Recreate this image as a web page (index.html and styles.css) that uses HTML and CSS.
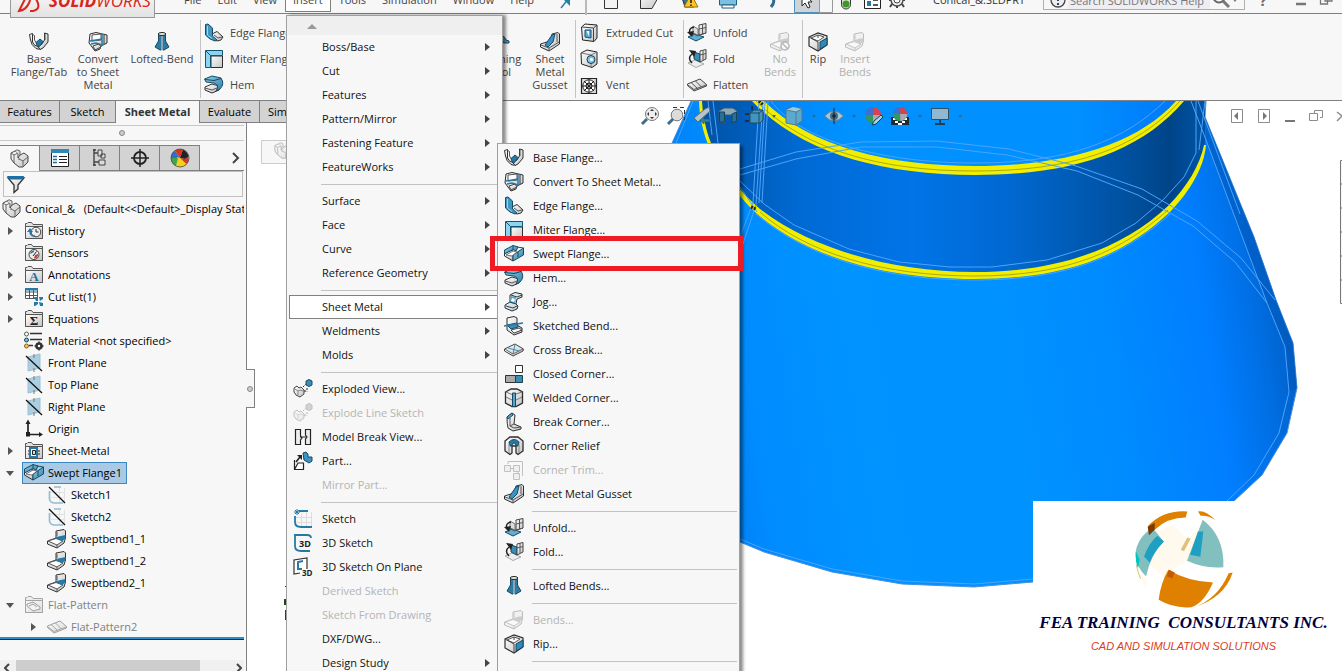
FILE: index.html
```html
<!DOCTYPE html>
<html lang="en">
<head>
<meta charset="utf-8">
<title>Conical_&amp;.SLDPRT</title>
<link rel="stylesheet" href="styles.css">
</head>
<body>
<svg class="defs" aria-hidden="true">
  <defs>
    <linearGradient id="gBlue" x1="0" y1="0" x2="1" y2="1"><stop offset="0" stop-color="#8fd0ea"/><stop offset="1" stop-color="#2b7da6"/></linearGradient>
    <linearGradient id="gGrey" x1="0" y1="0" x2="1" y2="1"><stop offset="0" stop-color="#fff"/><stop offset="1" stop-color="#c4c4c4"/></linearGradient>
  </defs>
  <g stroke-linejoin="round">
  <symbol id="base" viewBox="0 0 20 20"><g stroke="#2e2e2e"><path fill="url(#gGrey)" d="M.5 2.500 3.500 1.500V10Q5 14 9 14.500L12 16.500Q10 18 7 16.500 2 13 1.500 8Z"/><path fill="url(#gGrey)" d="M15.500 1 19 2V10L14 16 11 17.500 9 14.500 13 12 15.500 8Z"/></g><path fill="none" stroke="#555" d="M3 2 5.500 3.500V8L8 12M16 2V8"/><path fill="#2679a5" stroke="#14506f" d="M7 10.500 11 7 14 9.500 10.500 14.500 8 13.500Z"/></symbol>
  <symbol id="convert" viewBox="0 0 20 20"><path fill="url(#gGrey)" stroke="#2e2e2e" d="M2 2 8 .5 19 3V11L13 14 12 17 7 19 4 15 1 11Z"/><path fill="#fff" stroke="#555" d="M4 3 13 2V8L4 9Z"/><path fill="none" stroke="#2679a5" stroke-width="1.500" d="M2 9 14 7 14 2M3 12 8 11 14 13 14 7"/><path fill="url(#gGrey)" stroke="#444" d="M5 14 11 12 13 15 7 18Z"/><path fill="none" stroke="#333" d="M16 3V12"/></symbol>
  <symbol id="edge" viewBox="0 0 20 20"><path fill="url(#gGrey)" stroke="#2e2e2e" d="M8 11 13 8.500 19 14 17 17 13 18 8 15Z"/><path fill="none" stroke="#555" d="M10 12 14 15 18 14"/><path fill="#4296bd" stroke="#174a63" d="M1.500 1.500 4 1 8.500 5V13L13 17 11 18 6 16 1.500 12Z"/><path fill="none" stroke="#9cd5ec" d="M3.500 3V12L8 15.500"/></symbol>
  <symbol id="miter" viewBox="0 0 20 20"><path fill="url(#gGrey)" stroke="#2e2e2e" d="M7 7H18.500V18.500H7Z"/><path fill="#8ad5ef" stroke="#17556f" d="M1.500 1.500H18.500V6.500H6.500V18.500H1.500Z"/><path stroke="#17556f" d="M2 2 6.500 6.500"/></symbol>
  <symbol id="swept" viewBox="0 0 20 20"><path fill="url(#gGrey)" stroke="#2e2e2e" d="M.5 9 8 6 9 11V17L.5 12Z"/><path fill="url(#gBlue)" stroke="#174a63" d="M.5 6 9 1.500 14 3 12 7 9 5.500.5 10Z"/><path fill="url(#gBlue)" stroke="#174a63" d="M9 11 19.500 4V11L9 17Z"/><path fill="#fff" stroke="#555" stroke-width=".8" d="M2 11 9 7 13 8 8 12Z"/><path fill="none" stroke="#174a63" d="M9 1.500V5.500M13 3 19.500 4M14 8V13"/></symbol>
  <symbol id="hem" viewBox="0 0 20 20"><path fill="url(#gGrey)" stroke="#2e2e2e" d="M1 12 8 9 15 11 15 15 8 18 1 15Z"/><path fill="url(#gBlue)" stroke="#174a63" d="M.5 4 8 1 17 3Q21 9 16 14L12 16Q16 10 10 8L2 7Z"/><path fill="none" stroke="#174a63" d="M1 4.500 10 5.500 17 3.500"/><path fill="none" stroke="#555" d="M1 13 8 15 13 13"/></symbol>
  <symbol id="jog" viewBox="0 0 20 20"><path fill="url(#gGrey)" stroke="#2e2e2e" d="M6 3 11 .5 18 2V5L13 7 12 12 14 14 13 17 8 19 1 16V13L6 10Z"/><path fill="#55a6cc" d="M7 4 12 5 11 12 6 11Z"/><path fill="none" stroke="#174a63" d="M7 3 13 5 18 3M6 10 12 12M2 14 9 16 13 14"/><path fill="#fff" d="M8 6 11 7 10 10 7 9Z"/></symbol>
  <symbol id="sketched" viewBox="0 0 20 20"><path fill="url(#gGrey)" stroke="#2e2e2e" d="M3 2 10 .5 13 2V9L18 12V16L10 19 3 14Z"/><path fill="#3a8db5" stroke="#174a63" d="M3 9 13 7 14 11 7 13Z"/><path stroke="#2679a5" stroke-width="1.500" d="M0 10 19 7"/><path fill="#fff" stroke="#444" d="M7 14 15 12 18 14 10 17Z"/></symbol>
  <symbol id="cross" viewBox="0 0 20 20"><path fill="url(#gGrey)" stroke="#444" d="M.5 9 11 4 19.500 9 19 11 9 16 .5 11Z"/><path fill="none" stroke="#3a8db5" d="M4 8 15 11M9 14 11 4.500"/><path fill="none" stroke="#666" d="M1 9 9 14 19 9"/></symbol>
  <symbol id="closed" viewBox="0 0 20 20"><path fill="#fff" stroke="#333" d="M11.500 1.500H18.500V8.500H11.500Z"/><path fill="#aaa" stroke="#333" d="M1.500 11.500H11.500V18.500H1.500Z"/><path fill="#3a8db5" stroke="#1d3f52" d="M11.500 11.500H18.500V18.500H11.500Z"/></symbol>
  <symbol id="welded" viewBox="0 0 20 20"><path fill="url(#gGrey)" stroke="#2e2e2e" stroke-width="1.300" d="M1.500 4 7 1H13L18.500 4V15L12 18.500H8L1.500 15Z"/><path fill="none" stroke="#777" d="M2 4 9 7 18 4M2 9 8 12M18 9 12 12"/><path fill="#55a6cc" stroke="#174a63" d="M8.500 5H11.500V18.500H8.500Z"/></symbol>
  <symbol id="break" viewBox="0 0 20 20"><path fill="url(#gGrey)" stroke="#333" d="M3 5 8 1 11 3 10 12 17 15 17 17 9 19 4 16Q3 12 3 5Z"/><path fill="#55a6cc" stroke="#174a63" d="M3 5 8 1 9 3 4 7Z"/><path fill="none" stroke="#555" d="M6 6V14L10 16 17 15M6 14 10 12"/></symbol>
  <symbol id="relief" viewBox="0 0 20 20"><path fill="url(#gGrey)" stroke="#2e2e2e" stroke-width="1.300" d="M1 5 6 1H14L19 5V15L14 18.500 12 17V10H8V17L6 18.500 1 15Z"/><path fill="#2679a5" stroke="#174a63" d="M5 6Q10 1 15 6L14 10H12Q12 7 10 7T8 10H6Z"/><path stroke="#888" d="M5 8V17M15 8V17"/></symbol>
  <symbol id="trim" viewBox="0 0 20 20"><path fill="none" stroke="#444" d="M4 4V1.500H18.500V16M7 8.500H10M14 11V13"/><path fill="#ddd" stroke="#444" d="M.5 5.500H6.500V11.500H.5ZM9.500 5.500H15.500V11.500H9.500ZM9.500 13.500H15.500V19.500H9.500Z"/></symbol>
  <symbol id="gusset" viewBox="0 0 20 20"><path fill="url(#gGrey)" stroke="#2e2e2e" d="M12 2 18 .5 19.500 2V12L9 19 .5 15V12L10 9Z"/><path fill="none" stroke="#555" d="M1 13 9 16 19 10M9 16V19M17 2V10"/><path fill="#3a93c2" stroke="#174a63" d="M5 13 12 3 15 2 13 10 8 15Z"/></symbol>
  <symbol id="unfold" viewBox="0 0 20 20"><path fill="#5fb0d3" stroke="#174a63" d="M1 14 8 11 17 14 9 18Z"/><path fill="#ddd" stroke="#777" d="M6 3 11 6V12L6 10Z"/><path fill="url(#gGrey)" stroke="#444" d="M12 2 19 .5V10L12 12Z"/><path fill="none" stroke="#555" d="M12 6 19 4.500M15.500 1.500V11M6 10 10 13 19 10"/><path fill="none" stroke="#222" stroke-width="1.500" d="M7 4Q1 5 3 11"/><path fill="#222" d="M0 9 7 8 5 14Z"/></symbol>
  <symbol id="fold" viewBox="0 0 20 20"><path fill="#eee" stroke="#aaa" d="M1 14 8 11 17 15 9 18.500Z"/><path fill="#3a8db5" stroke="#174a63" d="M7 3 13 5V13L7 10Z"/><path fill="url(#gGrey)" stroke="#444" d="M13 2 19 .5V10L13 13Z"/><path fill="none" stroke="#555" d="M13 6 19 4.500M16 1.500V11"/><path fill="none" stroke="#222" stroke-width="1.500" d="M5 14Q0 9 5 5"/><path fill="#222" d="M2 1 9 2 7 8Z"/></symbol>
  <symbol id="lofted" viewBox="0 0 20 20"><path fill="#2d7ba0" stroke="#174a63" d="M6.500 2V9L3 15 8 18H9.500V3ZM13.500 2V9L17 15 12 18H10.500V3Z"/><ellipse cx="10" cy="2" rx="3.800" ry="1.500" fill="#eee" stroke="#222"/><path stroke="#fff" d="M10 4V19"/></symbol>
  <symbol id="bend" viewBox="0 0 20 20"><path fill="url(#gGrey)" stroke="#333" d="M9 2 17 .5 18.500 2V9L17 14 10 19 .5 15V12L9 9Z"/><path fill="#fff" stroke="#555" d="M1 12 9 9.500 16 12 10 16Z"/><path fill="#2679a5" d="M9 8 18.500 6V9L15 12.500 13 11 9 9.500Z"/><path stroke="#555" d="M10 3V7M10 16V19"/></symbol>
  <symbol id="nobends" viewBox="0 0 20 20"><use href="#bend"/><circle cx="15" cy="14" r="4" fill="#fff" stroke="#222" stroke-width="1.500"/><path stroke="#222" stroke-width="1.500" d="M12 11 18 17"/></symbol>
  <symbol id="rip" viewBox="0 0 20 20"><path fill="url(#gGrey)" stroke="#2e2e2e" stroke-width="1.200" d="M1 5 10 1 19 4V13L10 19 1 14Z"/><path fill="#fff" stroke="#555" d="M3 6 10 3 16 5 10 9Z"/><path fill="none" stroke="#444" d="M1 5 10 10V19M10 3V6"/><path fill="#2f8ab5" stroke="#174a63" d="M12 10 19 6V13L12 17Z"/></symbol>
  <symbol id="xcut" viewBox="0 0 20 20"><path fill="url(#gGrey)" stroke="#222" d="M1.500 4 5 1 17 2V15L14 18.500 2.500 17Z"/><path fill="none" stroke="#444" d="M2 4 13.500 5V18M13.500 5 17 2"/><path fill="#56b0dc" stroke="#17506f" d="M5 7H11V15L5 14Z"/><path fill="#fff" d="M6.500 8H9V13Z"/></symbol>
  <symbol id="hole" viewBox="0 0 20 20"><path fill="url(#gGrey)" stroke="#222" d="M1 4 7 1 17 3V15L12 18.500 1.500 15Z"/><path fill="none" stroke="#777" d="M1.500 4 11 6V18M11 6 17 3"/><circle cx="11" cy="10.500" r="4" fill="#7cc4e6" stroke="#1d3f52"/><circle cx="11.500" cy="10.500" r="1.600" fill="#fff"/></symbol>
  <symbol id="vent" viewBox="0 0 20 20"><path fill="#ddd" stroke="#222" stroke-width="1.200" d="M1.500 3.500H16.500V18.500H1.500Z"/><circle cx="9" cy="11" r="6.200" fill="#fff" stroke="#222"/><circle cx="9" cy="11" r="3" fill="none" stroke="#222"/><path stroke="#222" d="M9 4V18M2 11H16M4 6 14 16M14 6 4 16"/></symbol>
  <symbol id="flatten" viewBox="0 0 20 20"><path fill="url(#gGrey)" stroke="#444" d="M.5 9 13 4 19.500 9.500V11L7 16 .5 10.500Z"/><path fill="none" stroke="#555" d="M4 7.500 10.500 13.500M8.500 6 14.500 12M1 10 7 14.500 19 10"/></symbol>
  <symbol id="forming" viewBox="0 0 20 20"><path fill="#4a9bc2" stroke="#174a63" d="M2 3Q14 1 16 8L19 9V11H14Q10 7 2 8Z"/><path stroke="#222" stroke-width="2" d="M10 10V18"/></symbol>

  <symbol id="part" viewBox="0 0 20 20"><path fill="url(#gGrey)" stroke="#444" d="M1 4 5 2 8 4V9L10 6 14 4 18 7V13L13 18H9L4 14 1 10Z"/><path fill="none" stroke="#666" d="M1 4 4 6V14M4 6 8 4M9 10 13 12V18M13 12 18 8M9 9V11"/><path fill="#ddd" stroke="#666" d="M5 2 7 .8 10 2V6"/></symbol>
  <symbol id="folder" viewBox="0 0 20 20"><path fill="#e3e3e3" stroke="#555" d="M1.500 17.500V2.500H3L4 1.500H7.500L9 3.500H18.500V17.500Z"/><path fill="url(#gGrey)" stroke="#555" d="M1.500 5.500H18.500V17.500H1.500Z"/></symbol>
  <symbol id="history" viewBox="0 0 20 20"><use href="#folder"/><circle cx="12" cy="11" r="4.800" fill="#eee" stroke="#444"/><path fill="none" stroke="#333" d="M12 8V11H14.500"/><path fill="none" stroke="#2679a5" stroke-width="1.600" d="M11 15Q6 15 6 10"/><path fill="#2679a5" d="M3 11 6 7 9 11Z"/></symbol>
  <symbol id="sensors" viewBox="0 0 20 20"><use href="#folder"/><circle cx="10" cy="11.500" r="5" fill="#eee" stroke="#444"/><path fill="#2679a5" d="M6 11A4 4 0 0 1 10 7.500V9Z"/><path fill="#d33f1c" d="M10 15.500A4 4 0 0 0 14 11L11 12Z"/><path stroke="#222" d="M9 13 12.500 8.500"/></symbol>
  <symbol id="cutlist" viewBox="0 0 20 20"><path fill="#fff" stroke="#555" d="M1.500 1.500H13.500V11.500H1.500ZM5.500 2V11.500M9.500 2V11.500M2 5H13M2 8.500H13"/><path fill="#2679a5" d="M1 1H14V3.500H1Z"/><path fill="#2679a5" d="M10 10H14V14H12ZM15 10H19V12L16 14ZM10 15H14V17L11 19H10ZM15 15 19 16V19H16Z"/></symbol>
  <symbol id="material" viewBox="0 0 20 20"><g stroke-width="1"><circle cx="2.500" cy="3" r="2" fill="#fff" stroke="#555"/><circle cx="2.500" cy="9" r="2" fill="#6bb9dd" stroke="#245"/><circle cx="2.500" cy="15" r="2" fill="#ffd01a" stroke="#853"/></g><path stroke="#333" stroke-width="1.600" d="M6 2.500H18M6 8.500H18M5 14.500H9"/><circle cx="15" cy="15" r="2.500" fill="#fff" stroke="#333" stroke-width="2.600"/><path stroke="#333" stroke-width="1.500" d="M15 10.500V12M15 18V19.500M10.500 15H12M18 15H19.500"/></symbol>
  <symbol id="plane" viewBox="0 0 20 20"><path fill="#aacfe2" stroke="#9dc0d2" d="M4 4 16 1V15L4 18Z"/><path stroke="#777" d="M10 1V5M10 15V19"/><path stroke="#111" stroke-width="1.300" d="M2 3 18 18"/></symbol>
  <symbol id="origin" viewBox="0 0 20 20"><path fill="none" stroke="#222" stroke-width="1.700" d="M4 3V15.500H16"/><path fill="#222" d="M1.500 5 4 .5 6.500 5ZM15 13 19 15.500 15 18ZM2 13H6V17.500H2Z"/></symbol>
  <symbol id="smfolder" viewBox="0 0 20 20"><use href="#folder"/><path fill="#fff" stroke="#2679a5" stroke-width="2" d="M6 7H13V16H6Z"/><path fill="#ddd" stroke="#222" d="M8.500 9.500H11.500V13.500H8.500ZM4 10H5M4 13H5M14 10H16M14 13H16"/></symbol>
  <symbol id="sketchline" viewBox="0 0 20 20"><path stroke="#e2e2e2" d="M12.500 3V18M17.500 3V18M4 7.500H18M4 12.500H18"/><path fill="none" stroke="#93bdd2" stroke-width="1.700" d="M7 2H14M2.500 6V14Q3 18 8 18H16"/><path stroke="#111" stroke-width="1.300" d="M2 2 18 18"/></symbol>
  <symbol id="flatfolder" viewBox="0 0 20 20"><use href="#folder"/><path fill="#eee" stroke="#444" d="M3 9 9 7 16 12V14L9 16 3 11ZM5 11 9 9 13 12"/></symbol>

  <symbol id="proplist" viewBox="0 0 20 20"><path fill="#fff" stroke="#222" d="M1.500 1.500H18.500V18.500H1.500Z"/><path fill="#3188b5" d="M1 1H19V5H1Z"/><path stroke="#1c6f9b" stroke-width="1.500" d="M3 8.500H7M3 11.500H7M3 14.500H7"/><path stroke="#222" d="M9 8.500H17M9 11.500H17M9 14.500H17"/></symbol>
  <symbol id="config" viewBox="0 0 20 20"><path fill="none" stroke="#444" stroke-width="1.400" d="M4 1V18M4 5H8M4 14H10M3 2H6M3 17H6"/><path fill="#ddd" stroke="#444" d="M8 2H12V8H8ZM11 6H15V10H11ZM9 12H15V17H9Z"/></symbol>
  <symbol id="target" viewBox="0 0 20 20"><circle cx="10" cy="10" r="6" fill="none" stroke="#222" stroke-width="1.800"/><path stroke="#222" stroke-width="1.500" d="M10 1V19M1 10H19"/></symbol>
  <symbol id="ball" viewBox="0 0 20 20"><circle cx="10" cy="10" r="9" fill="#ddd"/><path fill="#2f6fc8" d="M10 10H1A9 9 0 0 1 5 2.500Z"/><path fill="#d93324" d="M10 10 5 2.500A9 9 0 0 1 13 1.500Z"/><path fill="#222" d="M10 10 13 1.500A9 9 0 0 1 18.500 9L15 11Z"/><path fill="#f3d01d" d="M10 10 7 9 6 18A9 9 0 0 0 17.500 15Z"/><path fill="#43a547" d="M1 10A9 9 0 0 0 6 18L8 10Z"/><path fill="#d93324" d="M10 10 15 11 18.500 9A9 9 0 0 1 16.500 16Z"/><circle cx="10" cy="10" r="9" fill="none" stroke="#444" stroke-width=".8"/></symbol>
  <symbol id="filter" viewBox="0 0 20 20"><path fill="url(#gGrey)" stroke="#333" stroke-width="1.300" d="M2 4H18L12 11V15L8 18.500V11Z"/><path fill="#1c6fa0" d="M1 2H18L17 5.500H3Z"/></symbol>

  <symbol id="exploded" viewBox="0 0 20 20"><path fill="url(#gGrey)" stroke="#444" d="M1 9 4 7 6 9 8 8 11 11V15L7 18 3 16 1 13Z"/><path fill="none" stroke="#888" d="M2 10 5 12V16M5 12 7 11 10 12"/><path fill="#3a8db5" stroke="#174a63" d="M13 2 16 .5 19 2V6L16 7.500 13 6Z"/><path stroke="#222" stroke-dasharray="2 1.500" d="M10 8 13 5M12 11V14M14 9V13"/></symbol>
  <symbol id="mbreak" viewBox="0 0 20 20"><path fill="#eee" stroke="#222" stroke-width="1.200" d="M2.500 2.500H7.500V9L9 11 7.500 13V17.500H2.500ZM12.500 2.500H17.500V17.500H12.500V12L14 10 12.500 8Z"/><path stroke="#222" d="M7 10H13"/></symbol>
  <symbol id="partout" viewBox="0 0 20 20"><path fill="#fff" stroke="#222" stroke-width="1.200" d="M1.500 9V18.500H10.500V12H5L1.500 18.500"/><path stroke="#222" stroke-width="1.600" d="M3 11 7 6"/><path fill="#222" d="M4 4H9V9Z"/><path fill="#3a93c2" stroke="#174a63" d="M10 2 13 1 15 3V6L19 6V10L16 12 11 9Z"/></symbol>
  <symbol id="sketch" viewBox="0 0 20 20"><path stroke="#ddd" d="M8.500 5V17M13.500 3V17M18.500 3V17M3 8.500H19M3 13.500H19"/><path fill="none" stroke="#2679a5" stroke-width="1.800" d="M6 2H15M2 7V13Q2 18 8 18H19"/><path stroke="#2679a5" d="M4 0V6M1 3H7M2 1 6 5M6 1 2 5"/></symbol>

  <symbol id="zoomfit" viewBox="0 0 20 20"><circle cx="12" cy="8" r="6.500" fill="#eee" stroke="#777"/><path stroke="#3d6f8a" stroke-width="3" d="M7 13 2 18"/><path fill="#333" d="M12 3 14 5H10ZM12 13 14 11H10ZM7 8 9 6V10ZM17 8 15 6V10Z"/></symbol>
  <symbol id="zoomarea" viewBox="0 0 20 20"><path fill="none" stroke="#333" stroke-dasharray="4 3" d="M7 1.500H18.500V14"/><circle cx="11" cy="9" r="5.800" fill="#dcdcdc" stroke="#777"/><path stroke="#3d6f8a" stroke-width="3" d="M7 13 2 18"/></symbol>
  <symbol id="prev" viewBox="0 0 20 20"><path fill="#b9c3ca" stroke="#56707f" d="M2 12 13 3 17 1 18 5 6 16Z"/><path fill="#2f7fa5" stroke="#1d5877" stroke-width=".6" d="M8 14.500 12 11V13H18V16H12V18Z"/></symbol>
  <symbol id="section" viewBox="0 0 20 20"><path fill="#8aa9ba" stroke="#3c5866" d="M1 5 6 2H15L19 5V15L14 17V9H7V17L1 16Z"/><path fill="#2a6f99" stroke="#17425c" d="M1.500 6H6.500V16H1.500ZM14 8 18.500 6V15L14 17Z"/></symbol>
  <symbol id="orient" viewBox="0 0 20 20"><path fill="#4295bf" stroke="#1c4a62" d="M6 7 10 4H19V14L16 17H6Z"/><path fill="none" stroke="#1c4a62" d="M6 7H15V17M15 7 19 4"/><path stroke="#222" stroke-width="1.500" d="M8 0V4M1 8H5M1 15H5"/></symbol>
  <symbol id="cube" viewBox="0 0 20 20"><path fill="#5aa9d1" stroke="#5d7786" d="M2 4 9 1 18 3V15L12 19 2 17Z"/><path fill="#9acbe0" d="M2 4 9 1 18 3 12 6Z"/><path fill="none" stroke="#5d7786" d="M2 4 12 6V19M12 6 18 3"/></symbol>
  <symbol id="eye" viewBox="0 0 20 20"><path fill="#a9c5d4" stroke="#5c7d91" d="M.5 10Q10 0 19.500 10 10 20 .5 10Z"/><circle cx="10" cy="10" r="4" fill="#3b6e8c"/><circle cx="10" cy="10" r="1.800" fill="#14242e"/><path stroke="#222" d="M10 2V18"/></symbol>
  <symbol id="sphere" viewBox="0 0 20 20"><path fill="#3f6fd0" d="M9 9V1A8 8 0 0 0 1 9Z"/><path fill="#d9414c" d="M9 9V1A8 8 0 0 1 17 9Z"/><path fill="#2f9a5a" d="M9 9H1A8 8 0 0 0 9 17Z"/><path fill="#a9a9b0" d="M9 9H17A8 8 0 0 1 9 17Z"/></symbol>
  <symbol id="appearance" viewBox="0 0 20 20"><use href="#sphere"/><path fill="#a6d3ea" stroke="#1c3c4d" d="M8 19 10 15 17 9 19 11 12 18Z"/></symbol>
  <symbol id="scene" viewBox="0 0 20 20"><path fill="#1c2c38" d="M1 11H19V19H1Z"/><path fill="#fff" d="M3 12H6V14H3ZM14 12H17V14H14ZM5 15H8V17H5ZM12 15H15V17H12ZM8 17H12V19H8Z"/><use href="#sphere" width="18" height="18" x="2"/></symbol>
  <symbol id="monitor" viewBox="0 0 20 20"><path fill="#8fb8d2" stroke="#334e60" d="M1.500 2.500H18.500V13.500H1.500Z"/><path fill="#1f3c4f" d="M9 14H11V17H15V19H5V17H9Z"/></symbol>
  </g>
</svg>

<header class="titlebar">
  <nav class="menubar">
    <a href="#">File</a><a href="#">Edit</a><a href="#">View</a><a href="#" class="open">Insert</a><a href="#">Tools</a><a href="#">Simulation</a><a href="#">Window</a><a href="#">Help</a>
    <svg class="pin" viewBox="0 0 12 20" aria-hidden="true"><path fill="none" stroke="#2380a5" stroke-width="1.500" d="M1 18 9 8"/><path fill="#2380a5" d="M3 9H10V16Z"/></svg>
  </nav>
  <div class="quick">
    <svg viewBox="584 -16 326 30" aria-hidden="true">
      <path stroke="#b9b9b9" stroke-width="2" d="M586 -16V14"/>
      <path fill="#f3f3f3" stroke="#333" d="M604.500 -10H617.500V7.500H604.500Z"/>
      <path fill="url(#gGrey)" stroke="#333" d="M640.500 -8V7.500H652L659 -5H647Z"/>
      <path fill="#3a6f8a" stroke="#333" d="M681 -6H694V6H685Z"/><path fill="#ffc421" stroke="#9b7113" d="M691 -7 698 6H684Z"/><path stroke="#222" stroke-width="1.600" d="M691 -3V2M691 3.500V5"/>
      <path fill="#7cc0e0" stroke="#1d5f80" d="M719.500 -4H736.500V4H719.500Z"/><path fill="#fff" stroke="#1d5f80" d="M722 4H734V7H722Z"/>
      <path fill="none" stroke="#2d6d92" stroke-width="3" d="M770 -5Q777 -1 771 6"/>
      <path fill="#cfd3d6" stroke="#4b93be" d="M794.500 -12H819.500V11.500H794.500Z"/><path fill="#f7f7f7" stroke="#999" d="M819.500 -12H832.500V11.500H819.500Z"/>
      <path fill="#fff" stroke="#222" d="M802 -10V5L805 2 808 7 810 6 808 1H812Z"/>
      <rect x="841.500" y="-10" width="9" height="18" rx="4.500" fill="#ddd" stroke="#333"/><circle cx="846" cy="3" r="3.500" fill="#3a9b1e"/>
      <path fill="#fff" stroke="#222" d="M864.500 -9H880.500V7.500H864.500Z"/><path fill="#2679a5" d="M867 0H871V5H867Z"/><path stroke="#222" stroke-width="1.500" d="M873 -1H878M873 4H878"/>
      <circle cx="897" cy="-1" r="6" fill="#eee" stroke="#444" stroke-width="1.300"/><circle cx="897" cy="-1" r="3" fill="#fff" stroke="#444"/><path stroke="#444" stroke-width="2" d="M897 5V7M892 3 890 6M902 3 904 6M889 -1H891M903 -1H905"/>
    </svg>
  </div>
  <div class="doc">Conical_&amp;.SLDPRT</div>
  <label class="search">
    <svg viewBox="0 0 16 16" aria-hidden="true"><circle cx="8" cy="8" r="7" fill="#eee" stroke="#444" stroke-width="1.300"/><path stroke="#246" stroke-width="2" d="M8 4V9M8 11V13"/></svg>
    <input type="text" placeholder="Search SOLIDWORKS Help" aria-label="Search SOLIDWORKS Help">
    <svg class="lens" viewBox="0 0 20 20" aria-hidden="true"><circle cx="7" cy="7" r="5.500" fill="none" stroke="#666" stroke-width="2"/><path stroke="#777" stroke-width="3" d="M11 11 17 17"/></svg>
    <i class="caret"></i>
  </label>
  <button class="help" aria-label="Help">?</button>
  <svg class="wins" viewBox="0 0 46 26" aria-hidden="true"><path stroke="#777" stroke-width="2.500" d="M1 17H11"/><path fill="#f7f7f7" stroke="#777" stroke-width="1.300" d="M30 7H37V14H30ZM25.500 11H32.500V17H25.500Z"/></svg>
  <div class="brand">
    <svg viewBox="0 0 28 26" aria-hidden="true"><path fill="none" stroke="#d9261c" stroke-width="2" d="M7 4H11Q15 8 12 15T2 23L8 11M26 4Q17 4 19 11 25 21 16 23H13"/></svg>
    <span><b>SOLID</b>WORKS</span>
  </div>
</header>

<section class="ribbon">
  <div class="group g1">
    <button class="big w66"><svg><use href="#base"/></svg>Base<br>Flange/Tab</button>
    <button class="big w52"><svg><use href="#convert"/></svg>Convert<br>to Sheet<br>Metal</button>
    <button class="big w76"><svg><use href="#lofted"/></svg>Lofted-Bend</button>
  </div>
  <div class="group g2">
    <div class="stack">
      <button class="small"><svg><use href="#edge"/></svg>Edge Flange</button>
      <button class="small"><svg><use href="#miter"/></svg>Miter Flange</button>
      <button class="small"><svg><use href="#hem"/></svg>Hem</button>
    </div>
    <button class="big w50 tail"><svg><use href="#forming"/></svg>Forming<br>Tool</button>
    <button class="big w50"><svg><use href="#gusset"/></svg>Sheet<br>Metal<br>Gusset</button>
  </div>
  <div class="group g3">
    <div class="stack">
      <button class="small"><svg><use href="#xcut"/></svg>Extruded Cut</button>
      <button class="small"><svg><use href="#hole"/></svg>Simple Hole</button>
      <button class="small"><svg><use href="#vent"/></svg>Vent</button>
    </div>
  </div>
  <div class="group g4">
    <div class="stack">
      <button class="small"><svg><use href="#unfold"/></svg>Unfold</button>
      <button class="small"><svg><use href="#fold"/></svg>Fold</button>
      <button class="small"><svg><use href="#flatten"/></svg>Flatten</button>
    </div>
    <button class="big w44 tail" disabled><svg><use href="#nobends"/></svg>No<br>Bends</button>
  </div>
  <div class="group g5">
    <button class="big w30"><svg><use href="#rip"/></svg>Rip</button>
    <button class="big w44" disabled><svg><use href="#bend"/></svg>Insert<br>Bends</button>
  </div>
</section>

<main class="work">
  <div class="left">
    <nav class="tabs">
      <button class="w60">Features</button><button class="w56">Sketch</button><button class="w84 on">Sheet Metal</button><button class="w60">Evaluate</button><button>Simulation</button>
    </nav>
    <aside class="panel">
      <div class="grip"><i></i></div>
      <div class="ptabs">
        <button class="on" aria-label="Feature tree"><svg><use href="#part"/></svg></button>
        <button aria-label="Properties"><svg><use href="#proplist"/></svg></button>
        <button aria-label="Configurations"><svg><use href="#config"/></svg></button>
        <button aria-label="Dimensions"><svg><use href="#target"/></svg></button>
        <button aria-label="Display"><svg><use href="#ball"/></svg></button>
        <span class="next"><svg viewBox="0 0 8 12" aria-hidden="true"><path fill="none" stroke="#444" stroke-width="2" d="M1 1 6 6 1 11"/></svg></span>
      </div>
      <div class="filter"><svg><use href="#filter"/></svg></div>
      <ul class="tree">
        <li class="root"><svg><use href="#part"/></svg>Conical_&amp;&nbsp;&nbsp; (Default&lt;&lt;Default&gt;_Display State 1&gt;)</li>
        <li><i class="ar"></i><svg><use href="#history"/></svg>History</li>
        <li><i></i><svg><use href="#sensors"/></svg>Sensors</li>
        <li><i class="ar"></i><svg viewBox="0 0 20 20"><use href="#folder"/><text x="10" y="16" text-anchor="middle" class="glyph-serif" fill="#1f6f9c">A</text></svg>Annotations</li>
        <li><i class="ar"></i><svg><use href="#cutlist"/></svg>Cut list(1)</li>
        <li><i class="ar"></i><svg viewBox="0 0 20 20"><use href="#folder"/><text x="10" y="16" text-anchor="middle" class="glyph-serif" fill="#222">Σ</text></svg>Equations</li>
        <li><i></i><svg><use href="#material"/></svg>Material &lt;not specified&gt;</li>
        <li><i></i><svg><use href="#plane"/></svg>Front Plane</li>
        <li><i></i><svg><use href="#plane"/></svg>Top Plane</li>
        <li><i></i><svg><use href="#plane"/></svg>Right Plane</li>
        <li><i></i><svg><use href="#origin"/></svg>Origin</li>
        <li><i class="ar"></i><svg><use href="#smfolder"/></svg>Sheet-Metal</li>
        <li><i class="ar down"></i><span class="sel"><svg><use href="#swept"/></svg>Swept Flange1</span></li>
        <li class="sub"><i></i><svg><use href="#sketchline"/></svg>Sketch1</li>
        <li class="sub"><i></i><svg><use href="#sketchline"/></svg>Sketch2</li>
        <li class="sub"><i></i><svg><use href="#bend"/></svg>Sweptbend1_1</li>
        <li class="sub"><i></i><svg><use href="#bend"/></svg>Sweptbend1_2</li>
        <li class="sub"><i></i><svg><use href="#bend"/></svg>Sweptbend2_1</li>
        <li class="off"><i class="ar down"></i><svg><use href="#flatfolder"/></svg>Flat-Pattern</li>
        <li class="sub off"><i class="ar"></i><svg><use href="#flatten"/></svg>Flat-Pattern2</li>
      </ul>
      <div class="rollback"></div>
      <div class="hscroll"><svg viewBox="0 0 6 10" aria-hidden="true"><path fill="none" stroke="#444" stroke-width="2" d="M5 1 1 5 5 9"/></svg><i></i><svg viewBox="0 0 6 10" aria-hidden="true"><path fill="none" stroke="#444" stroke-width="2" d="M1 1 5 5 1 9"/></svg></div>
      <div class="handle"><i></i></div>
    </aside>
  </div>

  <section class="viewport">
    <svg class="model" viewBox="247 101 1095 570" preserveAspectRatio="xMinYMin slice" aria-hidden="true">
      <defs>
        <linearGradient id="cone" gradientUnits="userSpaceOnUse" x1="670" y1="440" x2="1300" y2="340">
          <stop offset="0" stop-color="#0078f0"/><stop offset=".14" stop-color="#008cff"/><stop offset=".3" stop-color="#0094ff"/><stop offset=".55" stop-color="#0092ff"/><stop offset=".72" stop-color="#008aff"/><stop offset=".86" stop-color="#007eff"/><stop offset=".93" stop-color="#0070e6"/><stop offset="1" stop-color="#005ec4"/>
        </linearGradient>
        <linearGradient id="wall" gradientUnits="userSpaceOnUse" x1="700" y1="0" x2="1205" y2="0">
          <stop offset="0" stop-color="#0052a4"/><stop offset=".2" stop-color="#006ad4"/><stop offset=".42" stop-color="#0074e8"/><stop offset=".62" stop-color="#0068d0"/><stop offset=".85" stop-color="#00509e"/><stop offset=".93" stop-color="#004488"/><stop offset="1" stop-color="#0054a6"/>
        </linearGradient>
        <linearGradient id="top" gradientUnits="userSpaceOnUse" x1="770" y1="0" x2="1180" y2="0">
          <stop offset="0" stop-color="#0086fa"/><stop offset=".2" stop-color="#0092ff"/><stop offset=".75" stop-color="#0090ff"/><stop offset="1" stop-color="#0078fa"/>
        </linearGradient>
      </defs>
      <path fill="url(#cone)" stroke="#4a8fd8" d="M691 101 640 214V500H670L740 542 764 552 832 572 902 584 974 587 1033 582 1120 566 1190 535 1234 501 1262 475 1287 433 1297 388 1293 343 1276 300 1254 237 1205 117 1206 101Z"/>
      <path fill="#0058b8" opacity=".55" d="M1205 117 1254 237 1276 300 1293 343 1297 388 1289 392 1285 347 1267 303 1206 140Z"/>
      <path fill="url(#wall)" d="M700 101C701 135 716 170 756 209 800 248 880 275 975 275S1130 241 1170 209C1190 184 1204 165 1205 140V101Z"/>
      <path fill="url(#top)" d="M758 101C800 148 880 171 975 171S1145 148 1180 101Z"/>
      <path fill="#f2ee00" d="M699 101C700 140 720 178 756 213 805 255 880 279 975 279S1125 254 1170 212C1190 191 1204 168 1206 145L1204 145C1200 165 1187 187 1168 206 1125 247 1060 272 975 272S810 248 760 209C722 176 704 140 702 101Z"/>
      <path fill="#f2ee00" d="M752 101C800 152 880 175 975 175S1140 153 1184 101H1176C1135 147 1060 166 975 166S810 147 764 101Z"/>
      <path fill="none" stroke="#8e8a16" opacity=".7" d="M756 101C805 150 880 171 975 171S1137 150 1180 101M760 212C805 252 880 276 975 276S1123 250 1168 210"/>
      <g fill="none" stroke="#4ca3fb">
        <path d="M740 169 796 152 861 142 937 141 1009 149 1073 165 1142 189 1197 221 1241 258 1275 300"/>
        <path d="M740 175 796 159 861 147 937 147 1007 155 1077 171 1138 195 1193 226 1235 262 1267 303 1285 347 1289 392 1279 433 1254 475 1227 501"/>
        <path d="M740 539 764 549 832 569 902 581 974 584 1033 579"/>
        <path d="M771 101C800 140 880 163 975 163S1125 140 1165 101"/>
        <path d="M740 181 764 204 794 225 849 249 899 262 950 267H992L1047 260 1102 243 1136 223 1163 200 1184 177 1196 153V101"/>
        <path d="M708 101 712 135M713 101 718 143M759 101 753 203 740 237M763 101 756 205 741 250M768 101 762 203M765 101 759 203M740 187 757 212M693 101 676 143"/>
        <path d="M1191 101 1206 140 1267 303M1198 101 1240 214M1205 101 1199 150"/>
        <path d="M756 214C805 256 880 280 975 280S1125 255 1171 213"/>
      </g>
      <path stroke="#222" stroke-width="3" stroke-dasharray="2 1" d="M751 207 756 209M759 101 763 105"/>
      <path fill="#f7f7f7" stroke="#ccc" d="M261.500 140.500H300V163.500H261.500Z"/><use href="#part" x="274" y="142" width="18" height="18" opacity=".4"/>
      <path stroke="#174d17" stroke-width="2" d="M286 586V587M285 599V605M286 610V620"/>
      <path fill="#f7f7f7" stroke="#777" d="M1340.500 160.500H1350V303.500H1340.500ZM1341 184H1350M1341 208H1350M1341 232H1350M1341 256H1350M1341 280H1350"/>
    </svg>
    <div class="hud">
      <svg><use href="#zoomfit"/></svg><svg><use href="#zoomarea"/></svg><svg><use href="#prev"/></svg><svg><use href="#section"/></svg><svg><use href="#orient"/></svg><i></i><svg><use href="#cube"/></svg><i></i><svg><use href="#eye"/></svg><i></i><svg><use href="#appearance"/></svg><svg><use href="#scene"/></svg><i></i><svg><use href="#monitor"/></svg><i></i>
    </div>
    <svg class="docwins" viewBox="0 0 112 16" aria-hidden="true"><g fill="none" stroke="#8c8c8c"><path d="M1.500 1.500H12.500V14.500H1.500ZM28.500 1.500H39.500V14.500H28.500Z"/><path d="M84.500 5V2.500H92.500V9.500H90M79.500 5.500H87.500V12.500H79.500Z"/><path stroke-width="1.500" d="M107 4 112 8 107 13"/></g><path fill="#777" d="M8 4V12L4 8ZM33 4V12L37 8ZM55 12H65V14H55Z"/></svg>
    <div class="sponsor">
      <svg viewBox="400 80 300 305" aria-hidden="true">
        <path fill="#fff9ee" d="M460 155 515 130 560 170 600 140 560 235 520 262 495 290 440 245 490 180ZM412 265 440 300 435 320Z"/>
        <path fill="#e08000" d="M443 132Q490 85 560 90L555 108Q500 108 462 145L443 160ZM592 90Q612 84 645 116 620 100 600 103ZM503 265Q560 300 637 303 610 365 572 377 520 382 474 355 480 305 503 265ZM684 275 696 273Q672 350 573 380 650 355 684 275Z"/>
        <path fill="#82bfbf" d="M440 150 462 146 489 180Q450 220 436 285 405 255 404 215 410 175 440 150ZM606 115Q672 165 668 257 610 262 559 238Z"/>
        <path fill="#1fa0c2" d="M470 163 490 180Q460 210 447 243L430 225Q445 185 470 163ZM592 150 608 150 599 226 568 220Z"/>
        <path fill="#00c4c0" d="M406 210 417 235 412 260Q403 240 406 210Z"/>
        <path fill="#7b3a05" d="M441 136 462 124V145L445 161Z"/><path fill="#c25a0a" d="M505 265 522 273 515 291 498 284Z"/><path fill="#dfc17c" d="M560 168 570 172 550 209 540 205Z"/><path fill="none" stroke="#e0c060" stroke-width="3" d="M407 250Q412 275 420 292"/>
      </svg>
      <strong>FEA TRAINING&nbsp; CONSULTANTS INC.</strong>
      <em>CAD AND SIMULATION SOLUTIONS</em>
    </div>
  </section>
</main>

<div class="menu insert-menu" role="menu">
  <div class="up"><i></i></div>
  <button role="menuitem" class="more">Boss/Base</button>
  <button role="menuitem" class="more">Cut</button>
  <button role="menuitem" class="more">Features</button>
  <button role="menuitem" class="more">Pattern/Mirror</button>
  <button role="menuitem" class="more">Fastening Feature</button>
  <button role="menuitem" class="more">FeatureWorks</button>
  <hr>
  <button role="menuitem" class="more">Surface</button>
  <button role="menuitem" class="more">Face</button>
  <button role="menuitem" class="more">Curve</button>
  <button role="menuitem" class="more">Reference Geometry</button>
  <hr>
  <button role="menuitem" class="more hot">Sheet Metal</button>
  <button role="menuitem" class="more">Weldments</button>
  <button role="menuitem" class="more">Molds</button>
  <hr>
  <button role="menuitem"><svg><use href="#exploded"/></svg>Exploded View...</button>
  <button role="menuitem" disabled><svg><use href="#exploded"/></svg>Explode Line Sketch</button>
  <button role="menuitem"><svg><use href="#mbreak"/></svg>Model Break View...</button>
  <button role="menuitem"><svg><use href="#partout"/></svg>Part...</button>
  <button role="menuitem" disabled>Mirror Part...</button>
  <hr>
  <button role="menuitem"><svg><use href="#sketch"/></svg>Sketch</button>
  <button role="menuitem"><svg viewBox="0 0 20 20"><path fill="none" stroke="#2679a5" stroke-width="1.800" d="M1 2H14Q18 2 18 5M2 2V13Q2 18 8 18H17"/><text x="6" y="14" class="glyph" fill="#222">3D</text></svg>3D Sketch</button>
  <button role="menuitem"><svg viewBox="0 0 20 20"><path fill="#fff" stroke="#333" stroke-width="1.200" d="M7 16 1 17V3L14 1V12"/><path fill="none" stroke="#2679a5" stroke-width="2" d="M10 4 5 5V12L9 12"/><text x="9" y="19" class="glyph-sm" fill="#222">3D</text></svg>3D Sketch On Plane</button>
  <button role="menuitem" disabled>Derived Sketch</button>
  <button role="menuitem" disabled>Sketch From Drawing</button>
  <button role="menuitem">DXF/DWG...</button>
  <button role="menuitem" class="more">Design Study</button>
</div>

<div class="menu sub-menu" role="menu">
  <button role="menuitem"><svg><use href="#base"/></svg>Base Flange...</button>
  <button role="menuitem"><svg><use href="#convert"/></svg>Convert To Sheet Metal...</button>
  <button role="menuitem"><svg><use href="#edge"/></svg>Edge Flange...</button>
  <button role="menuitem"><svg><use href="#miter"/></svg>Miter Flange...</button>
  <button role="menuitem" class="marked"><svg><use href="#swept"/></svg>Swept Flange...</button>
  <button role="menuitem"><svg><use href="#hem"/></svg>Hem...</button>
  <button role="menuitem"><svg><use href="#jog"/></svg>Jog...</button>
  <button role="menuitem"><svg><use href="#sketched"/></svg>Sketched Bend...</button>
  <button role="menuitem"><svg><use href="#cross"/></svg>Cross Break...</button>
  <button role="menuitem"><svg><use href="#closed"/></svg>Closed Corner...</button>
  <button role="menuitem"><svg><use href="#welded"/></svg>Welded Corner...</button>
  <button role="menuitem"><svg><use href="#break"/></svg>Break Corner...</button>
  <button role="menuitem"><svg><use href="#relief"/></svg>Corner Relief</button>
  <button role="menuitem" disabled><svg><use href="#trim"/></svg>Corner Trim...</button>
  <button role="menuitem"><svg><use href="#gusset"/></svg>Sheet Metal Gusset</button>
  <hr>
  <button role="menuitem"><svg><use href="#unfold"/></svg>Unfold...</button>
  <button role="menuitem"><svg><use href="#fold"/></svg>Fold...</button>
  <hr>
  <button role="menuitem"><svg><use href="#lofted"/></svg>Lofted Bends...</button>
  <hr>
  <button role="menuitem" disabled><svg><use href="#bend"/></svg>Bends...</button>
  <button role="menuitem"><svg><use href="#rip"/></svg>Rip...</button>
  <hr>
</div>
</body>
</html>
```
FILE: styles.css
```css
* { box-sizing: border-box; }
body {
  margin: 0;
  height: 100vh;
  overflow: hidden;
  position: relative;
  display: flex;
  flex-direction: column;
  background: #f7f7f7;
  color: #000;
  font: 11px/16px "Open Sans", "Noto Sans", sans-serif;
}
button {
  font: inherit;
  color: inherit;
  background: none;
  border: 0;
  padding: 0;
  margin: 0;
}
.defs { position: absolute; width: 0; height: 0; }
.glyph-serif { font: bold 13px "Liberation Serif", serif; }
.glyph { font: bold 9px "Open Sans", sans-serif; }
.glyph-sm { font: bold 8px "Open Sans", sans-serif; }

/* Title bar: the upper half lies above the window's top edge */
.titlebar {
  position: relative;
  z-index: 2;
  flex: none;
  display: flex;
  align-items: center;
  height: 27px;
  margin-top: -13px;
  border-bottom: 1px solid #808080;
  color: #333;
}
.menubar { display: flex; flex: none; align-items: center; width: 584px; height: 100%; padding-left: 176px; }
.menubar a { padding: 0 7px; color: #444; text-decoration: none; line-height: 22px; border: 1px solid transparent; }
.menubar .open { background: #fff; border-color: #808080; }
.pin { width: 12px; height: 20px; margin-left: 18px; }
.quick { flex: none; width: 326px; height: 30px; }
.quick svg { width: 326px; height: 30px; display: block; }
.doc { flex: none; width: 110px; margin-left: 23px; }
.search {
  flex: none;
  display: flex;
  align-items: center;
  width: 202px;
  height: 20px;
  padding-left: 6px;
  border: 1px solid #b0b0b0;
}
.search svg { width: 16px; height: 16px; flex: none; }
.search .lens { width: 20px; height: 20px; margin-left: 2px; }
.search input {
  flex: none;
  width: 142px;
  height: 18px;
  margin-left: 2px;
  padding: 0 2px;
  border: 0;
  background: #ededf2;
  font: inherit;
}
.search input::placeholder { color: #777; opacity: 1; }
.caret { border: 3px solid transparent; border-top: 4px solid #777; border-bottom: 0; }
.help { width: 36px; font-size: 15px; font-weight: bold; color: #666; }
.wins { width: 46px; height: 26px; margin-left: 14px; flex: none; }
.brand {
  position: absolute;
  left: 10px;
  top: -4px;
  display: flex;
  align-items: center;
  gap: 4px;
  width: 145px;
  height: 35px;
  padding-left: 6px;
  background: linear-gradient(#fff, #e2e2e2);
  border: 1px solid #999;
  color: #d9261c;
  font: italic 17px/24px "Open Sans", sans-serif;
}
.brand svg { width: 28px; height: 26px; flex: none; }

/* Ribbon */
.ribbon {
  flex: none;
  display: flex;
  align-items: stretch;
  height: 87px;
  padding: 6px 0 2px;
  border-bottom: 1px solid #808080;
  color: #444;
}
.group { display: flex; flex: none; border-right: 1px solid #c4c4c4; }
.g1 { width: 201px; padding-left: 6px; }
.g2 { width: 375px; padding-left: 3px; }
.g3 { width: 108px; padding-left: 4px; }
.g4 { width: 119px; padding-left: 3px; }
.g5 { border: 0; }
.tail { margin-left: auto; }
.big { display: block; flex: none; align-self: flex-start; padding-top: 12px; line-height: 13px; text-align: center; white-space: nowrap; }
.big svg { display: block; width: 20px; height: 20px; margin: 0 auto; }
.w30 { width: 30px; } .w44 { width: 44px; } .w50 { width: 50px; }
.w52 { width: 52px; } .w56 { width: 56px; } .w60 { width: 60px; }
.w66 { width: 66px; } .w76 { width: 76px; } .w84 { width: 84px; }
.stack { display: flex; flex-direction: column; }
.small { display: flex; align-items: center; gap: 6px; height: 26px; white-space: nowrap; }
.small svg { width: 20px; height: 20px; }
.big:disabled { color: #b0b0b0; }
:disabled svg { filter: grayscale(1); opacity: .3; }

/* Work area */
.work { flex: 1; min-height: 0; display: grid; grid-template-columns: 247px 1fr; }
.left { display: flex; flex-direction: column; min-height: 0; }
.tabs {
  position: relative;
  z-index: 1;
  flex: none;
  display: flex;
  width: 490px;
  height: 22px;
  background: #f7f7f7;
  border-bottom: 1px solid #808080;
}
.tabs button { flex: none; background: #d3d3d3; border-right: 1px solid #808080; }
.tabs button:last-child { padding: 0 8px; }
.tabs .on { background: #f7f7f7; font-weight: bold; color: #333; margin-bottom: -1px; }
.panel {
  position: relative;
  flex: 1;
  min-height: 0;
  display: flex;
  flex-direction: column;
  padding: 2px 2px 0 0;
  border-right: 1px solid #808080;
}
.grip { flex: none; height: 16px; border: solid #c8c8c8; border-width: 1px 0; display: grid; place-items: center; }
.grip i, .handle i { width: 6px; height: 6px; border-radius: 50%; background: #ccc; border: 1px solid #888; }
.ptabs { display: flex; flex: none; height: 26px; margin-top: 4px; border-bottom: 1px solid #808080; }
.ptabs button { width: 40px; background: #d3d3d3; border: solid #808080; border-width: 1px 1px 0 0; display: grid; place-items: center; }
.ptabs .on { background: #f7f7f7; margin-bottom: -1px; }
.ptabs svg { width: 20px; height: 20px; }
.ptabs .next { margin-left: auto; display: grid; place-items: center; width: 16px; }
.ptabs .next svg { width: 8px; height: 12px; }
.filter { flex: none; height: 26px; margin: 0 1px 0 3px; border: 1px solid #c0c0c0; padding: 2px; }
.filter svg { width: 20px; height: 20px; display: block; }
.tree { list-style: none; margin: 1px 0 0; padding: 0; flex: none; overflow: hidden; }
.tree li { display: flex; align-items: center; height: 22px; padding-left: 6px; white-space: nowrap; }
.tree svg { width: 20px; height: 20px; flex: none; margin: 0 4px 0 0; }
.tree li > i { width: 18px; flex: none; }
.tree .root { padding-left: 2px; }
.tree .root svg { margin-right: 3px; }
.tree .sub { padding-left: 29px; }
.tree .off { color: #808080; }
.tree .off svg { filter: grayscale(1); opacity: .5; }
.ar::before { content: ""; display: block; width: 0; border: 4px solid transparent; border-left: 5px solid #555; border-right: 0; margin-left: 2px; }
.down::before { border: 4px solid transparent; border-top: 5px solid #555; border-bottom: 0; margin-left: 0; }
.sel { display: flex; align-items: center; height: 22px; margin-left: -2px; padding: 0 4px 0 1px; background: #aac9e4; border: 1px solid #3b87bf; }
.rollback { flex: none; height: 3px; margin-top: -1px; background: #2f8bc6; border-bottom: 1px solid #20208c; }
.hscroll { margin-top: 20px; flex: none; height: 15px; display: flex; align-items: center; background: #f0f0f0; padding: 0 2px 0 4px; }
.hscroll svg { width: 6px; height: 10px; }
.hscroll i { width: 184px; height: 15px; background: #cdcdcd; margin: 0 auto 0 6px; }
.handle {
  position: absolute;
  left: 246px;
  top: 246px;
  width: 9px;
  height: 39px;
  background: #f7f7f7;
  border: 1px solid #808080;
  border-left: 0;
  display: grid;
  place-items: center;
  z-index: 2;
}

/* Graphics area */
.viewport { position: relative; background: #fff; overflow: hidden; min-width: 0; }
.model { display: block; width: 100%; height: 100%; }
.hud { position: absolute; left: 393px; top: 5px; display: flex; align-items: center; gap: 6px; }
.hud svg { width: 20px; height: 20px; }
.hud i { width: 8px; display: grid; place-items: center; }
.hud i::before { content: ""; border: 2px solid transparent; border-top: 3px solid #44617c; border-bottom: 0; }
.docwins { position: absolute; right: 0; top: 7px; width: 112px; height: 16px; }
.sponsor {
  position: absolute;
  right: 0;
  bottom: 0;
  width: 309px;
  height: 170px;
  padding: 7px 8px 0 0;
  background: #fff;
  display: flex;
  flex-direction: column;
  align-items: center;
  white-space: nowrap;
}
.sponsor svg { width: 100px; height: 102px; }
.sponsor strong { font: italic bold 17px/26px "Liberation Serif", serif; color: #000040; }
.sponsor em { font: italic 11px/20px "Liberation Sans Narrow", "Liberation Sans", sans-serif; color: #d8401a; }

/* Menus */
.menu {
  position: absolute;
  z-index: 3;
  background: #f7f7f7;
  border: 1px solid #a0a0a0;
  box-shadow: 3px 3px 3px rgba(0, 0, 0, .45);
  color: #111;
}
.menu button {
  position: relative;
  display: flex;
  align-items: center;
  width: 100%;
  height: 24px;
  text-align: left;
  white-space: nowrap;
  border: 1px solid transparent;
}
.menu button svg { position: absolute; width: 20px; height: 20px; }
.menu hr { height: 1px; margin: 5px 0 4px; border: 0; background: #c2c2c2; }
.menu button:disabled { color: #b4b4b4; }
.insert-menu { left: 286px; top: 15px; bottom: 0; width: 217px; overflow: hidden; padding-left: 2px; border-bottom: 0; box-shadow: 3px 0 3px rgba(0, 0, 0, .45); }
.insert-menu button { padding-left: 32px; padding-right: 11px; }
.insert-menu button svg { left: 3px; }
.insert-menu hr { margin-left: 32px; }
.up { height: 19px; margin-left: -2px; background: #efefef; padding: 8px 0 0 20px; }
.up i { display: block; width: 0; border: 5px solid transparent; border-bottom: 5px solid #999; border-top: 0; }
.more::after { content: ""; border: 4px solid transparent; border-left: 5px solid #444; border-right: 0; margin-left: auto; }
.insert-menu .hot { background: #fff; border-color: #808080; }
.sub-menu { left: 497px; top: 143px; bottom: 0; width: 243px; padding: 2px 2px 0 1px; border-bottom: 0; }
.sub-menu button { padding-left: 33px; }
.sub-menu button svg { left: 4px; }
.sub-menu hr { margin-left: 33px; }
.sub-menu .marked::before {
  content: "";
  position: absolute;
  inset: -7px -7px -6px -10px;
  border: 5px solid #ed1c24;
  z-index: 1;
}
```
